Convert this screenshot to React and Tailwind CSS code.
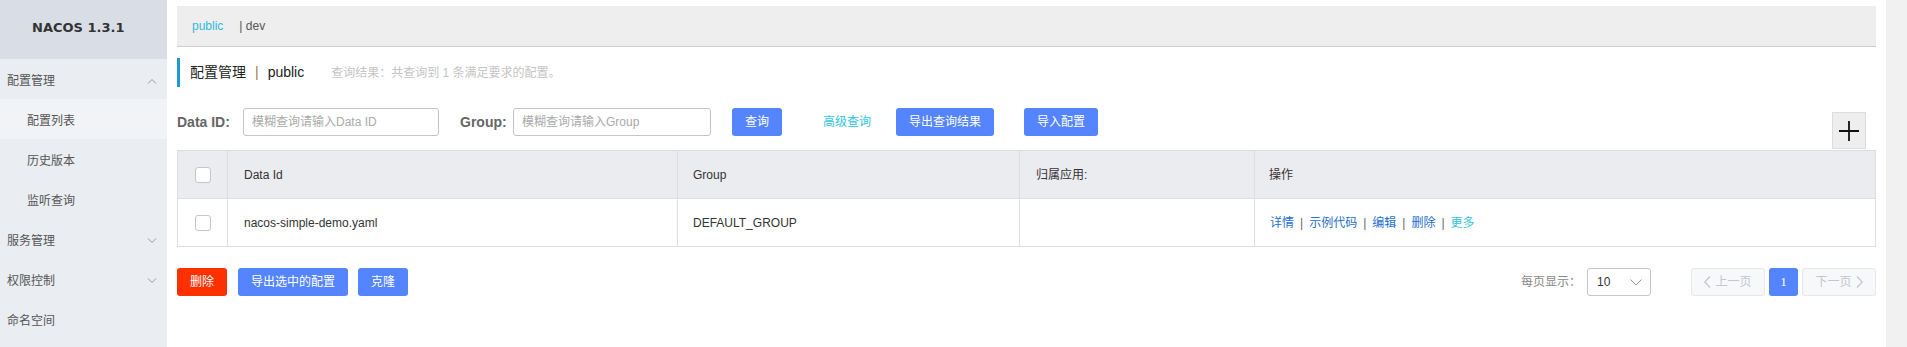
import React from 'react';

const font = { fontFamily: '"Liberation Sans", "Noto Sans CJK SC", sans-serif' };

const Chevron = ({ up }) => (
  <svg width="10" height="6" viewBox="0 0 10 6" className="text-[#999]">
    <polyline
      points={up ? '1,5.5 5,1.5 9,5.5' : '1,0.5 5,4.5 9,0.5'}
      fill="none"
      stroke="currentColor"
      strokeWidth="1"
    />
  </svg>
);

const SideItem = ({ label, sub, active, chevron }) => (
  <div
    className={`h-[40px] pt-[3px] flex items-center justify-between text-[12px] text-[#555] ${
      sub ? 'pl-[27px]' : 'pl-[7px]'
    } pr-[10px] ${active ? 'bg-[#f2f3f7]' : ''}`}
  >
    <span>{label}</span>
    {chevron && <Chevron up={chevron === 'up'} />}
  </div>
);

const Btn = ({ children, red, className = '' }) => (
  <button
    className={`h-[28px] px-[13px] rounded-[3px] text-[12px] text-white leading-none ${
      red ? 'bg-[#ff3000]' : 'bg-[#5584ff]'
    } ${className}`}
  >
    {children}
  </button>
);

const Checkbox = () => (
  <div className="w-[16px] h-[16px] bg-white border border-[#c4c6cf] rounded-[3px]" />
);

const Sep = () => <span className="mx-[6px] text-[#666]">|</span>;

export default function App() {
  return (
    <div className="flex w-full h-screen bg-white" style={font}>
      {/* Sidebar */}
      <aside className="w-[167px] shrink-0 bg-[#eaedf1]">
        <div className="h-[59px] bg-[#d9dee6] pt-[15px] pl-[32px]">
          <span
            className="text-[13px] font-bold text-[#333]"
            style={{ fontFamily: '"DejaVu Sans", sans-serif' }}
          >
            NACOS 1.3.1
          </span>
        </div>
        <SideItem label="配置管理" chevron="up" />
        <SideItem label="配置列表" sub active />
        <SideItem label="历史版本" sub />
        <SideItem label="监听查询" sub />
        <SideItem label="服务管理" chevron="down" />
        <SideItem label="权限控制" chevron="down" />
        <SideItem label="命名空间" />
      </aside>

      {/* Main */}
      <main className="flex-1 pl-[10px] pr-[10px]">
        <div className="mt-[6px] h-[41px] bg-[#eeeeee] border-b border-[#cccccc] flex items-center pl-[15px] text-[12px]">
          <span className="text-[#2fb9e0]">public</span>
          <span className="ml-[16px] text-[#555]">| dev</span>
        </div>

        <div className="mt-[11px] h-[29px] flex items-center border-l-[3px] border-[#1a9bd7] pl-[10px]">
          <span className="text-[14px] text-[#222]">配置管理</span>
          <span className="mx-[9px] text-[14px] text-[#a0784a]">|</span>
          <span className="text-[14px] text-[#222]">public</span>
          <span className="ml-[27px] text-[12px] text-[#c5c5c5]">
            查询结果：共查询到 1 条满足要求的配置。
          </span>
        </div>

        <div className="mt-[21px] flex items-start">
          <span className="w-[66px] h-[28px] flex items-center text-[14px] font-bold text-[#666]">
            Data ID:
          </span>
          <div className="w-[196px] h-[28px] border border-[#c4c6cf] rounded-[3px] flex items-center px-[8px] text-[12px] text-[#aaa]">
            模糊查询请输入Data ID
          </div>
          <span className="ml-[21px] w-[53px] h-[28px] flex items-center text-[14px] font-bold text-[#666]">
            Group:
          </span>
          <div className="w-[198px] h-[28px] border border-[#c4c6cf] rounded-[3px] flex items-center px-[8px] text-[12px] text-[#aaa]">
            模糊查询请输入Group
          </div>
          <Btn className="ml-[21px]">查询</Btn>
          <span className="ml-[41px] h-[28px] flex items-center text-[12px] text-[#33c6e3]">
            高级查询
          </span>
          <Btn className="ml-[25px]">导出查询结果</Btn>
          <Btn className="ml-[30px]">导入配置</Btn>
          <button className="ml-auto mr-[10px] mt-[4px] w-[34px] h-[37px] bg-[#eeeeee] border border-[#dddddd] flex items-center justify-center">
            <svg width="20" height="20" viewBox="0 0 20 20">
              <path d="M10 0V20M0 10H20" stroke="#111" strokeWidth="1.8" />
            </svg>
          </button>
        </div>

        {/* Table */}
        <div className="mt-[1px] border border-[#dcdee3] text-[12px] text-[#333]">
          <div className="grid grid-cols-[50px_450px_342px_235px_1fr] h-[48px] bg-[#ebecf0] border-b border-[#dcdee3]">
            <div className="flex items-center justify-center border-r border-[#dcdee3]">
              <Checkbox />
            </div>
            <div className="flex items-center pl-[16px] border-r border-[#dcdee3]">Data Id</div>
            <div className="flex items-center pl-[15px] border-r border-[#dcdee3]">Group</div>
            <div className="flex items-center pl-[16px] border-r border-[#dcdee3]">归属应用:</div>
            <div className="flex items-center pl-[14px]">操作</div>
          </div>
          <div className="grid grid-cols-[50px_450px_342px_235px_1fr] h-[47px] bg-white">
            <div className="flex items-center justify-center border-r border-[#dcdee3]">
              <Checkbox />
            </div>
            <div className="flex items-center pl-[16px] border-r border-[#dcdee3]">
              nacos-simple-demo.yaml
            </div>
            <div className="flex items-center pl-[15px] border-r border-[#dcdee3]">DEFAULT_GROUP</div>
            <div className="border-r border-[#dcdee3]" />
            <div className="flex items-center pl-[15px] text-[#1f6fcf]">
              <span>详情</span>
              <Sep />
              <span>示例代码</span>
              <Sep />
              <span>编辑</span>
              <Sep />
              <span>删除</span>
              <Sep />
              <span className="text-[#33c6e3]">更多</span>
            </div>
          </div>
        </div>

        {/* Footer */}
        <div className="mt-[21px] flex items-center">
          <Btn red>删除</Btn>
          <Btn className="ml-[11px]">导出选中的配置</Btn>
          <Btn className="ml-[10px]">克隆</Btn>

          <div className="ml-auto flex items-center">
            <span className="text-[12px] text-[#888]">每页显示：</span>
            <div className="ml-[6px] w-[64px] h-[28px] border border-[#c4c6cf] rounded-[3px] flex items-center justify-between pl-[9px] pr-[8px] text-[12px] text-[#333]">
              <span>10</span>
              <svg width="12" height="7" viewBox="0 0 12 7">
                <polyline points="0.5,0.5 6,6 11.5,0.5" fill="none" stroke="#999" strokeWidth="1" />
              </svg>
            </div>
            <div className="ml-[40px] w-[74px] h-[28px] bg-[#f7f8fa] border border-[#e6e7eb] rounded-[3px] flex items-center justify-center gap-[4px] text-[12px] text-[#c4c6cf]">
              <svg width="7" height="12" viewBox="0 0 7 12">
                <polyline points="6,0.5 0.8,6 6,11.5" fill="none" stroke="#c4c6cf" strokeWidth="1.3" />
              </svg>
              <span>上一页</span>
            </div>
            <div
              className="ml-[4px] w-[29px] h-[28px] bg-[#5584ff] rounded-[3px] flex items-center justify-center text-[13px] text-white"
              style={{ fontFamily: '"Liberation Serif", serif' }}
            >
              1
            </div>
            <div className="ml-[4px] w-[74px] h-[28px] bg-[#f7f8fa] border border-[#e6e7eb] rounded-[3px] flex items-center justify-center gap-[4px] text-[12px] text-[#c4c6cf]">
              <span>下一页</span>
              <svg width="7" height="12" viewBox="0 0 7 12">
                <polyline points="1,0.5 6.2,6 1,11.5" fill="none" stroke="#c4c6cf" strokeWidth="1.3" />
              </svg>
            </div>
          </div>
        </div>
      </main>

      {/* Scrollbar track */}
      <div className="w-[21px] shrink-0 bg-[#f1f1f1]" />
    </div>
  );
}
